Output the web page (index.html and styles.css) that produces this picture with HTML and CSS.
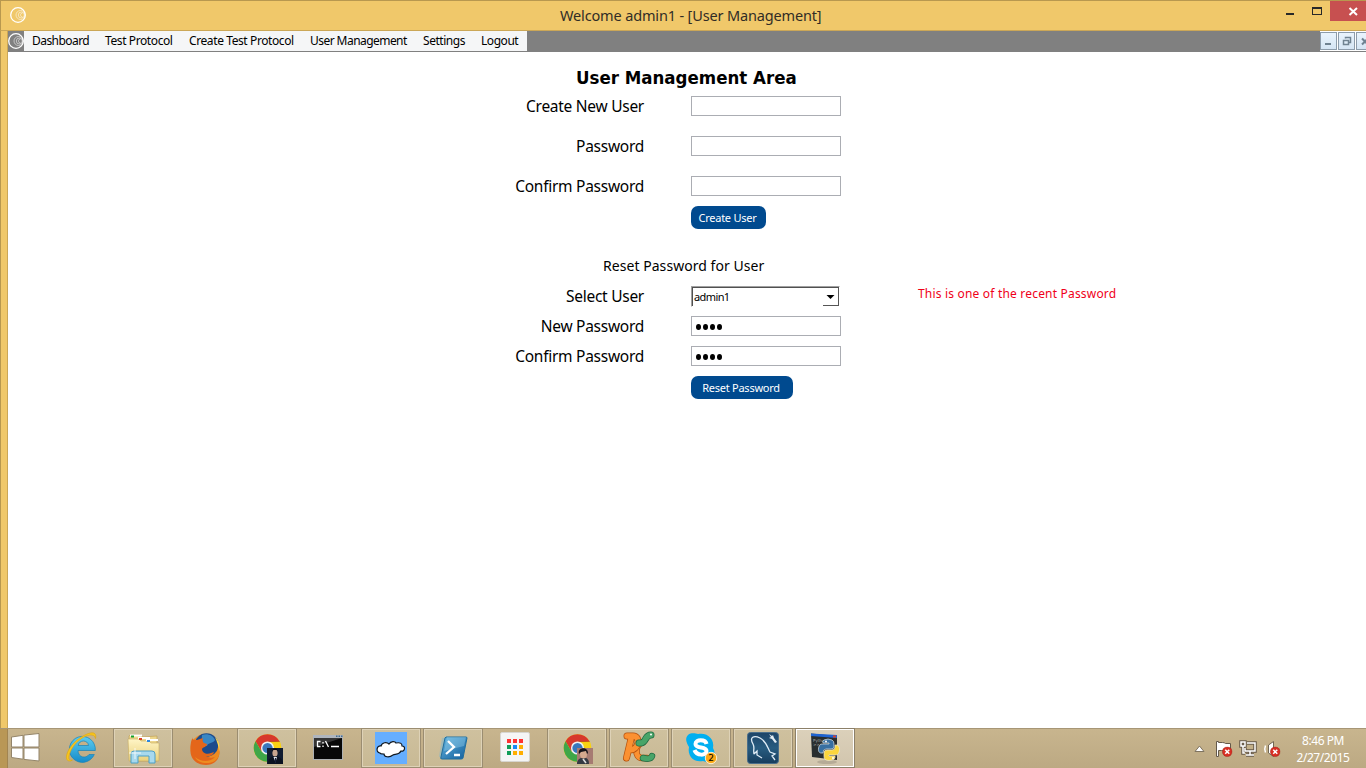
FILE: index.html
```html
<!DOCTYPE html>
<html lang="en">
<head>
<meta charset="utf-8">
<title>Welcome admin1 - [User Management]</title>
<link rel="stylesheet" href="styles.css">
</head>
<body>
<svg class="defs" width="0" height="0" aria-hidden="true">
  <defs>
    <symbol id="moon" viewBox="0 0 16 16">
      <g fill="none" stroke="#fff"><circle cx="8" cy="8" r="7.3" stroke-width="1.3"/><g stroke-width=".7" opacity=".75"><circle cx="10.5" cy="8" r="4.5"/><circle cx="11.3" cy="8" r="3"/><path d="M12.5 6a2 2 0 1 0 0 4"/></g></g>
    </symbol>
    <symbol id="chrome" viewBox="0 0 30 30">
      <circle cx="15" cy="15" r="14.3" fill="#f9d213"/>
      <path d="M2.6 7.9A14.3 14.3 0 0 1 27.4 7.9L15 8.5 8.8 18.6Z" fill="#d7392d"/>
      <path d="M2.6 7.9A14.3 14.3 0 0 0 14.6 29.3L21.2 18.6 8.8 18.6Z" fill="#3fa648"/>
      <path d="M15 8.3H27.6" stroke="#a92c22" stroke-width=".6"/>
      <circle cx="15" cy="15" r="6.8" fill="#eef1f3"/><circle cx="15" cy="15" r="5.3" fill="#3977bc"/>
    </symbol>
    <symbol id="denied" viewBox="0 0 12 12"><circle cx="6" cy="6" r="5.5" fill="#d82f24" stroke="#a3231b" stroke-width=".6"/><path d="M3.7 3.7 8.3 8.3M8.3 3.7 3.7 8.3" stroke="#fff" stroke-width="1.8"/></symbol>
    <linearGradient id="blue" x2="0" y2="1"><stop stop-color="#5ccdf1"/><stop offset="1" stop-color="#168bc9"/></linearGradient>
    <linearGradient id="folder" x2="0" y2="1"><stop stop-color="#fff5c6"/><stop offset="1" stop-color="#ead17c"/></linearGradient>
    <linearGradient id="shell" x2="1" y2="1"><stop stop-color="#63b4df"/><stop offset="1" stop-color="#135f9c"/></linearGradient>
    <linearGradient id="navy" x2="0" y2="1"><stop stop-color="#1e4568"/><stop offset=".5" stop-color="#285c80"/><stop offset="1" stop-color="#173d5d"/></linearGradient>
  </defs>
</svg>
<header class="titlebar">
  <svg class="app-icon" width="16" height="16"><use href="#moon"/></svg>
  <h1 class="window-title">Welcome admin1 - [User Management]</h1>
  <div class="window-controls">
    <svg class="min-max" width="84" height="21" shape-rendering="crispEdges"><rect x="40" y="12" width="8" height="2" fill="#282828"/><path d="M66 6h10v8H66zM67 8v5h8V8z" fill="#282828" fill-rule="evenodd"/></svg>
    <svg class="close" width="36" height="20"><path d="M19.500 7 27 14M27 7 19.500 14" stroke="#fff" stroke-width="2"/></svg>
  </div>
</header>
<div class="window">
  <nav class="menubar">
    <svg width="16" height="16"><use href="#moon"/></svg>
    <ul class="menu">
      <li class="m1">Dashboard</li><li class="m2">Test Protocol</li><li class="m3">Create Test Protocol</li><li class="m4">User Management</li><li class="m5">Settings</li><li class="m6">Logout</li>
    </ul>
    <div class="child-controls">
      <svg width="17" height="18"><path d="M4 10h6v2H4z" fill="#6f8291"/></svg>
      <svg width="17" height="18"><path d="M4.500 7.500H9.500V11.500H4.500zM6.500 5.500V4.500H11.500V9.500H10" fill="none" stroke="#6f8291" stroke-width="1.5"/></svg>
      <svg width="17" height="18"><path d="M5 5.500 11 11.500M11 5.500 5 11.500" stroke="#6f8291" stroke-width="2"/></svg>
    </div>
  </nav>
  <main class="content">
    <h2 class="heading"><span>User Management Area</span></h2>
    <div class="row tall"><label>Create New User</label><div class="field"></div></div>
    <div class="row tall"><label>Password</label><div class="field"></div></div>
    <div class="row"><label>Confirm Password</label><div class="field"></div></div>
    <div class="row"><label></label><button class="btn create">Create User</button></div>
    <h3 class="subheading"><span>Reset Password for User</span></h3>
    <div class="row"><label>Select User</label>
      <div class="select"><span>admin1</span><i class="arrow"><svg width="15" height="16"><path d="M3.500 7h8L7.500 11z"/></svg></i></div>
      <p class="error">This is one of the recent Password</p>
    </div>
    <div class="row"><label>New Password</label><div class="field dots"><b></b><b></b><b></b><b></b></div></div>
    <div class="row"><label>Confirm Password</label><div class="field dots"><b></b><b></b><b></b><b></b></div></div>
    <div class="row"><label></label><button class="btn reset">Reset Password</button></div>
  </main>
</div>
<footer class="taskbar">
  <svg class="start" width="51" height="40"><g fill="#fff" stroke="#94856a" stroke-width="1"><path d="M11.500 9 23 7.300V19H11.500zM24 7.100 39 5.500V19H24zM11.500 20H23V31.200L11.500 29.500zM24 20H39V33L24 31.400z"/></g></svg>
  <div class="tasks">
    <svg class="task"><path d="M44.300 22.500H27c0 7 8 8.500 11 4h5.300A13 13 0 1 1 44.300 22.500zM27.200 17.500H37.500c-.5-6-9.500-6-10.300 0z" fill="url(#blue)" stroke="#1782b8" stroke-width=".7" fill-rule="evenodd"/><path d="M19.500 33C11 34 16 17 32 8 41 3 46 4 44.500 10.500 43 2 24 10 18.500 26 17 31 18 32.500 21.500 32z" fill="#f7c51d" stroke="#dba314" stroke-width=".6"/></svg>
    <svg class="task open"><path d="M16 8 17 7H28L29 9 44 8V33H17z" fill="#edd68b" stroke="#bd9c50" stroke-width=".6"/><path d="M15 11H26L28 13H36L38 15H46V33H16z" fill="url(#folder)" stroke="#c8ac62" stroke-width=".6"/><path d="M17 7.500H29M25 10H37M33 12H45" stroke="#fff" stroke-width="2"/><path d="M18 8.500h3" stroke="#13a02b" stroke-width="2"/><path d="M26 11h3" stroke="#d74026" stroke-width="2"/><path d="M34 13h3" stroke="#2e88df" stroke-width="2"/><path d="M18 35V26q0-3 3-3H39q3 0 3 3v9H36V28H25v7z" fill="#a8d9ed" stroke="#4c9fc6"/><path d="M22 20v11M16 25h12" stroke="#fff" stroke-width="1" opacity=".8"/></svg>
    <svg class="task"><circle cx="30" cy="20.500" r="14.500" fill="#ef8a24"/><circle cx="31.500" cy="17" r="11.800" fill="#1d4b8c"/><path d="M27 7c5-2 11 0 13 5-2 4-7 2-8 6-3 0-6-5-5-11z" fill="#3a87c4"/><path d="M17 9c0 3 3 3 5 3 2-1 4-1 6-2-1 2 0 4 1 5l3 1c0 3-4 3-5 5 0 4 5 6 9 4l3-1c-1 4-5 5-8 4 6 4 13 1 13-7 2 9-4 16-13 16-10 0-16-7-15.500-15 0-4 0-8 1.500-11z" fill="#e4661a"/><path d="M20 29c6 5 14 5 19 1 3-3 4-7 4-11 4 8-1 16-11 16-6 0-10-2-12-6z" fill="#ee8c20"/><path d="M40 9c4 4 5.500 9 4 15 0-6-2-10-4-15z" fill="#ffd951"/></svg>
    <svg class="task open"><use href="#chrome" x="16" y="5.500" width="29" height="29"/><g><path d="M30 20h16v16H30z" fill="#111d31"/><path d="M31 36c0-6 3-7 7-8 5 1 8 3 8 8z" fill="#0b1220"/><ellipse cx="38" cy="25" rx="2.600" ry="3.600" fill="#c7a58f"/><path d="M35 24c0-5 6-5 6 0l-1-2h-4z" fill="#0d0d13"/><path d="M36.500 29H40l-1.500 5z" fill="#dde3eb"/><path d="M38 30h1v5h-1z" fill="#18213b"/></g></svg>
    <svg class="task"><rect x="14.500" y="7.500" width="29" height="24" fill="#080808" stroke="#adb0b2"/><path d="M14 7h30v3H14z" fill="#afb5bd"/><path d="M37 7.500h1.500V9H37zM39.500 7.500H41V9h-1.500zM42 7.500h1.500V9H42z" fill="#416a8d"/><path d="M15 10h28L15 19z" fill="#353535"/><path d="M21.500 13.500h-3v5h3M24 14v1.500M24 17.500V19M26.500 13l3 6M32 18.500h8" fill="none" stroke="#fff" stroke-width="1.300"/></svg>
    <svg class="task open"><path d="M14 4h32v32H14z" fill="#65aeff"/><path d="M19 25C14 24 16 17 20 18c1-4 6-4 8-2 2-3 6-3 7-1 5-1 6 1 6 3 4 0 3 6-1 5-2 4-6 3-8 4-4 3-9 2-9-1-2 0-4 0-4-1z" fill="#fff" stroke="#101820" stroke-width="1.200"/></svg>
    <svg class="task open"><path d="M20 10 17 29M22 9l-4 21" stroke="#69b6dd" opacity=".4" stroke-width="2"/><path d="M23 9H43q1 0 1 1l-4 20q0 1-2 1H19q-2 0-1-2l4-19z" fill="url(#shell)" stroke="#216e9e"/><path d="M24 9H43L41 18 21 23z" fill="#a5dcf4" opacity=".35"/><path d="M25 13l6 6-8 7M31 27h6" fill="none" stroke="#fff" stroke-width="2.300"/></svg>
    <svg class="task"><rect x="15.500" y="4.500" width="29" height="29" rx="1.500" fill="#f5f5f5" stroke="#d7d5d0"/><g><path d="M22 11h4v4h-4zM28 11h4v4h-4zM34 11h4v4h-4z" fill="#ff3131"/><path d="M22 17h4v4h-4zM22 23h4v4h-4z" fill="#109d58"/><path d="M28 17h4v4h-4z" fill="#1689f4"/><path d="M34 17h4v4h-4zM28 23h4v4h-4zM34 23h4v4h-4z" fill="#ffae00"/></g></svg>
    <svg class="task open"><use href="#chrome" x="16" y="5.500" width="29" height="29"/><path d="M30 20h16v16H30z" fill="#a67b72"/><path d="M30 36c0-5 4-6 6-7 5 1 6 3 6 7z" fill="#353a43"/><ellipse cx="36.500" cy="26" rx="3.500" ry="4.500" fill="#d5a98e"/><path d="M32 26c-2-7 9-8 9-1l-1 1-1-3-5 1z" fill="#17141a"/><path d="M36 31l3 4" stroke="#ddd" stroke-width="1.500"/></svg>
    <svg class="task open"><g fill="none" stroke-linecap="round" stroke-linejoin="round"><path d="M34 14c-8 2-9 16-1 16h5" stroke="#b5510d" stroke-width="6.500"/><path d="M34 14c-8 2-9 16-1 16h5" stroke="#fb9131" stroke-width="5"/><path d="M18 8H24c8 0 6 14-3 14M22 11 17.500 30" stroke="#b5510d" stroke-width="7"/><path d="M18 8H24c8 0 6 14-3 14M22 11 17.500 30" stroke="#fb9131" stroke-width="5.500"/><path d="M30 15c8 1 5-8 12-8" stroke="#206a43" stroke-width="7"/><path d="M30 15c8 1 5-8 12-8" stroke="#48a468" stroke-width="5.500"/><path d="M34 30c4 1 8 1 9-2" stroke="#206a43" stroke-width="6.500"/><path d="M34 30c4 1 8 1 9-2" stroke="#48a468" stroke-width="5"/></g><circle cx="42" cy="6.500" r="1" fill="#fff"/></svg>
    <svg class="task open"><path d="M17 7c4-3 8-1 10-1 9-2 17 5 15 14 5 9-3 16-10 13-9 2-16-5-14-14-3-5-4-9-1-12z" fill="#00aff0"/><path d="M35.500 16c-1-5-11-5-11 0 0 5 11 2 11 7 0 5-10 5-12-1" fill="none" stroke="#fff" stroke-width="4"/><circle cx="40" cy="30" r="5.700" fill="#fca916" stroke="#fff0cf"/><text x="37.200" y="33.300" class="badge">2</text></svg>
    <svg class="task open"><rect x="14.500" y="4.500" width="31" height="31" rx="3" fill="url(#navy)" stroke="#4a6e8a"/><path d="M21 26c-1-5 1-6-1-10-4-7 1-9 7-6 7 4 8 11 10 14l5 2-3 2 3 4M21 26l3-3 0 4 5 3" fill="none" stroke="#e0edf7" stroke-width="1.300"/><path d="m36 6 3 2 1-1 1 3 3 4-2 1-3-4-3-1 2-1z" fill="#e3edf4"/></svg>
    <svg class="task active"><ellipse cx="32" cy="34" rx="10" ry="2" fill="#8d8373" opacity=".4"/><path d="M16 5.500 42 8v24L17 29z" fill="#282d2e"/><path d="M16 5.500 42 7v3L16 8z" fill="#1f64d2"/><path d="M38 7.500h3v2h-3z" fill="#d6422e"/><text x="18" y="14" class="shelltext">Python</text><text x="18" y="18" class="shelltext">&gt;&gt;&gt;</text><path d="M29 12q4-2 8 0 2 1 2 4v3q0 2-3 2h-5q-3 0-3 4h-2c-4 0-3-9 1-9h7v-1h-6q-1-2 1-3z" fill="#386fa1" stroke="#d8e3e8" stroke-width=".7"/><path d="M40 17h2c4 1 3 10-1 10h-7v1h6q1 4-6 4.500-5 0-5-4V25q0-3 3-3h5q3 0 3-3z" fill="#fbd63d" stroke="#ece8d6" stroke-width=".7"/><circle cx="31" cy="13.500" r="1" fill="#fff"/><circle cx="38" cy="30" r="1" fill="#fff"/></svg>
  </div>
  <svg class="tray" width="130" height="40"><path d="M25 23.500 29.500 18 34 23.500z" fill="#fff" stroke="#7f7461"/><path d="M46.500 28.500V13.500h2v1h4q2 0 3 1h5v8h-6q-1-1-3-1h-3v6z" fill="#fff" stroke="#64594a" stroke-width="1"/><use href="#denied" x="52" y="18.500" width="10.500" height="10.500"/><path d="M77 15h8v8H75V20M71 14h4v4h-4zM73 18v7h2M80 23v4M76 27h8" fill="none" stroke="#65594a" stroke-width="3.500"/><path d="M77 15h8v8H75V20M71 14h4v4h-4zM73 18v7h2M80 23v4M76 27h8" fill="none" stroke="#fff" stroke-width="1.500"/><path d="M98.500 17v8l5 3.500V13.500z" fill="#fff" stroke="#716653" stroke-width="1"/><path d="M95.500 17.500q-1.500 3.500 0 7" fill="none" stroke="#fff" stroke-width="1.500"/><use href="#denied" x="100" y="18.500" width="10.500" height="10.500"/></svg>
  <div class="clock"><span class="time">8:46 PM</span><span class="date">2/27/2015</span></div>
</footer>
</body>
</html>
```
FILE: styles.css
```css
* { box-sizing: border-box; }
body { margin: 0; width: 1366px; height: 768px; overflow: hidden; display: flex; flex-direction: column; font-family: "Noto Sans", sans-serif; color: #000; background: #f0c86a; }
.defs { position: absolute; }
svg { display: block; flex: none; }
h1, h2, h3, p, ul { margin: 0; padding: 0; font-weight: 400; white-space: nowrap; }
.titlebar { height: 31px; flex: none; display: flex; border: 1px solid #b8984f; border-right: 0; border-bottom-color: #cba757; background: #f0c86a; }
.app-icon { margin: 6px 0 0 9px; }
.window-title { flex: 1; margin-left: 534px; font-size: 14.500px; line-height: 29px; color: #302c26; letter-spacing: -.15px; }
.window-controls { display: flex; }
.close { background: #c75050; }
.window { flex: 1; display: flex; flex-direction: column; padding-left: 8px; background: linear-gradient(90deg, #b8984f 1px, #f0c86a 1px 7px, #cba757 7px 8px, #fff 8px); }
.menubar { height: 21px; flex: none; display: flex; background: #808080; }
.menubar > svg { margin-top: 2px; }
.menu { display: flex; list-style: none; height: 20px; background: #f5f6f7; font-size: 12px; line-height: 20px; padding-left: 8px; width: 503px; letter-spacing: -.45px; white-space: nowrap; }
.m1 { width: 73px; letter-spacing: -.55px; } .m2 { width: 84px; letter-spacing: -.4px; } .m3 { width: 121px; letter-spacing: -.4px; } .m4 { width: 113px; letter-spacing: -.55px; } .m5 { width: 58px; }
.child-controls { display: flex; gap: 1px; margin-left: auto; width: 46px; height: 20px; padding-top: 1px; background: #fff; overflow: hidden; }
.child-controls svg { border: 1px solid #8d9cab; background: linear-gradient(#eaf4fd, #d5e5f4); }
.content { padding-top: 14px; font-size: 15.500px; }
.heading { height: 30px; padding-left: 568px; font: bold 18.500px/24px "DejaVu Sans Condensed", "DejaVu Sans", sans-serif; font-stretch: condensed; }
.row { height: 30px; display: flex; align-items: flex-start; }
.row.tall { height: 40px; }
.row label { width: 636px; margin-right: 47px; text-align: right; line-height: 20px; letter-spacing: -.27px; }
.field { width: 150px; height: 20px; border: 1px solid #abadb3; background: #fff; }
.btn { height: 23px; padding: 0 2px 0 0; border: 0; border-radius: 7px; background: #004a8f; color: #fff; font: 11px/23px "Noto Sans", sans-serif; letter-spacing: -.25px; }
.create { width: 75px; }
.reset { width: 102px; }
.subheading { height: 50px; padding: 20px 0 0 595px; font-size: 14px; line-height: 20px; letter-spacing: .05px; }
.select { width: 149px; height: 21px; border: 1px solid #a0a0a0; border-right-color: #fff; border-bottom-color: #fff; box-shadow: inset 1px 1px #505050; display: flex; font-size: 11px; line-height: 20px; padding-left: 2px; letter-spacing: -.6px; }
.arrow { margin: 1px 0 0 auto; width: 16px; height: 18px; border-right: 1px solid #555; border-bottom: 1px solid #555; }
.error { margin-left: 78px; padding-top: 1px; font-size: 12px; line-height: 14px; color: #f00019; letter-spacing: .19px; }
.dots { display: flex; gap: 2px; align-items: center; padding: 2px 0 0 4px; }
.dots b { width: 5px; height: 6px; border-radius: 50%; background: #000; }
.taskbar { height: 40px; flex: none; display: flex; border-top: 1px solid #a79676; background: linear-gradient(90deg, #b99756 7px, #a18451 7px 8px, transparent 8px), linear-gradient(#c8b58e, #bca983); }
.taskbar > svg { margin-top: -1px; }
.tasks { display: flex; gap: 2px; margin-top: -1px; }
.task { width: 60px; height: 40px; }
.open { background: linear-gradient(#cfc19f, #c8b994); box-shadow: inset 0 0 0 1px #9b8d71, inset 0 0 0 2px #ded2b7; }
.active { background: linear-gradient(#dcd1bb, #d1c5ad); box-shadow: inset 0 0 0 1px #8c8069, inset 0 0 0 2px #fff; }
.badge { font: 9px "DejaVu Sans", sans-serif; fill: #000; }
.shelltext { font: 4px "DejaVu Sans", sans-serif; fill: #aaa; }
.tray { margin-left: 315px; }
.clock { display: flex; flex-direction: column; width: 66px; margin-left: -10px; padding-top: 3px; align-items: center; font-size: 12px; line-height: 17px; color: #fff; letter-spacing: -.45px; white-space: nowrap; }
```
